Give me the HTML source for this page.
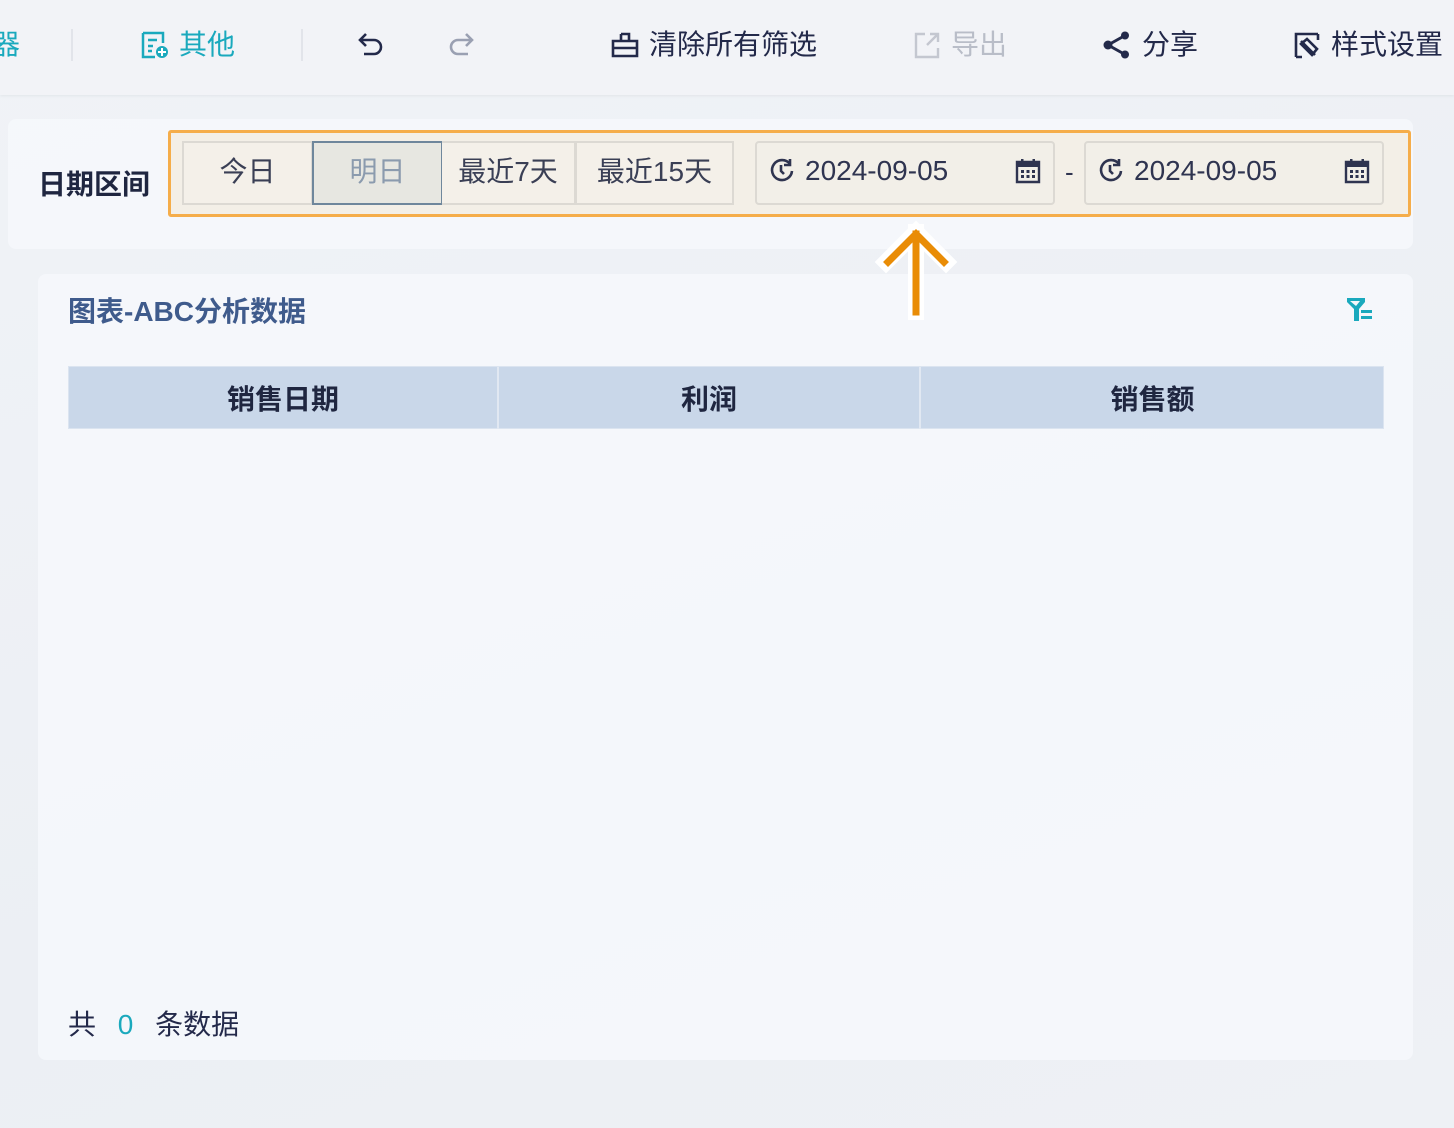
<!DOCTYPE html>
<html><head><meta charset="utf-8"><style>
*{box-sizing:border-box;margin:0;padding:0}
body{width:1454px;height:1128px;overflow:hidden;background:linear-gradient(160deg,#f0f3f7,#eceff4 60%,#eef1f5);font-family:"Liberation Sans","Noto Sans CJK SC",sans-serif;position:relative}
.abs{position:absolute}
.tb{left:0;top:0;width:1454px;height:95px;background:#f2f3f7;box-shadow:0 1px 3px rgba(0,0,0,.06)}
.ti{position:absolute;top:26px;font-size:28px;line-height:38px;color:#23294a;display:flex;align-items:center;gap:10px}
.sep{position:absolute;top:29px;width:2px;height:32px;background:#e2e4ea}
.card{background:rgba(246,248,251,.85);border-radius:8px}
.btn{position:absolute;top:8px;height:64px;border:2px solid #dcd9d3;background:#f4f0e9;font-size:28px;color:#3a3f55;display:flex;align-items:center;justify-content:center;padding-bottom:6px}
.dt{position:absolute;top:8px;height:64px;border:2px solid #dcd9d3;border-radius:4px;background:#f2efe8;font-size:28px;color:#2f3450;display:flex;align-items:center;padding-left:12px;gap:10px;padding-bottom:4px}
.th{position:absolute;top:0;height:62px;display:flex;align-items:center;justify-content:center;font-size:28px;font-weight:bold;color:#1f2640}
</style></head><body>
<div class="abs tb">
 <div class="ti" style="left:-8px;color:#1aa9bd">器</div>
 <div class="sep" style="left:71px"></div>
 <div class="ti" style="left:141px;color:#1aa9bd"><svg width="28" height="28" viewBox="0 0 28 28" fill="none" stroke="#1aa9bd" stroke-width="2.5"><path d="M2 2h20v10M2 2v24h12M7 9h9M7 15h5M7 20h4"/><circle cx="21" cy="21" r="6" fill="#1aa9bd" stroke="none"/><path d="M21 17v8M17 21h8" stroke="#fff" stroke-width="2"/></svg>其他</div>
 <div class="sep" style="left:301px"></div>
 <svg class="abs" style="left:358px;top:31px" width="28" height="28" viewBox="0 0 28 28" fill="none" stroke="#23294a" stroke-width="2.6"><path d="M8 3L2 9l6 6M2 9h14a7 7 0 010 14H6"/></svg>
 <svg class="abs" style="left:446px;top:31px" width="28" height="28" viewBox="0 0 28 28" fill="none" stroke="#9aa0b2" stroke-width="2.6"><path d="M20 3l6 6-6 6M26 9H12a7 7 0 000 14h10"/></svg>
 <div class="ti" style="left:611px"><svg width="28" height="28" viewBox="0 0 28 28" fill="none" stroke="#23294a" stroke-width="2.6"><path d="M10 3h8v7M2 10h24v15H2zM2 17h24M10 3v7"/></svg>清除所有筛选</div>
 <div class="ti" style="left:913px;color:#b9bdc8"><svg width="28" height="28" viewBox="0 0 28 28" fill="none" stroke="#c4c7d0" stroke-width="2.4"><path d="M12 3H3v23h22v-9M17 3h8v8M25 3L14 14"/></svg>导出</div>
 <div class="ti" style="left:1102px"><svg width="30" height="28" viewBox="0 0 30 28" fill="#23294a"><circle cx="6" cy="14" r="4.5"/><circle cx="23" cy="4.5" r="4"/><circle cx="23" cy="23.5" r="4"/><path d="M6 14L23 4.5M6 14l17 9.5" stroke="#23294a" stroke-width="3"/></svg>分享</div>
 <div class="ti" style="left:1293px"><svg width="28" height="28" viewBox="0 0 28 28" fill="none" stroke="#23294a" stroke-width="2.6"><path d="M3 26V3h22M3 26h6M25 3v6M8 10l14 14M14 8l10 10-5 6-11-11z"/></svg>样式设置</div>
</div>
<div class="abs card" style="left:8px;top:119px;width:1405px;height:130px"></div>
<div class="abs" style="left:38px;top:163px;font-size:28px;font-weight:bold;color:#1f2640">日期区间</div>
<div class="abs" style="left:168px;top:130px;width:1243px;height:87px;border:3px solid #f5ad4a;border-radius:3px;background:#f3efe7">
 <div class="btn" style="left:11px;width:131px">今日</div>
 <div class="btn" style="left:141px;width:131px;border-color:#6f879c;background:#e7e7e1;color:#8b9bae">明日</div>
 <div class="btn" style="left:271px;width:134px;border-left:none">最近7天</div>
 <div class="btn" style="left:404px;width:159px">最近15天</div>
 <div class="dt" style="left:584px;width:300px"><svg width="26" height="26" viewBox="0 0 26 26" fill="none" stroke="#2f3450" stroke-width="2.6"><path d="M21 6A10 10 0 1 0 23 13M21 1v6h-6M12 7v6l3 3"/></svg>2024-09-05<svg style="margin-left:auto;margin-right:12px" width="26" height="26" viewBox="0 0 26 26" fill="#2f3450"><path d="M2 4h22v20H2z" fill="none" stroke="#2f3450" stroke-width="2.4"/><rect x="2" y="4" width="22" height="5"/><rect x="6" y="1" width="2.5" height="5"/><rect x="17.5" y="1" width="2.5" height="5"/><rect x="6" y="12" width="3" height="3"/><rect x="11.5" y="12" width="3" height="3"/><rect x="17" y="12" width="3" height="3"/><rect x="6" y="17" width="3" height="3"/><rect x="11.5" y="17" width="3" height="3"/><rect x="17" y="17" width="3" height="3"/></svg></div>
 <div class="abs" style="left:894px;top:24px;font-size:26px;color:#2f3450">-</div>
 <div class="dt" style="left:913px;width:300px"><svg width="26" height="26" viewBox="0 0 26 26" fill="none" stroke="#2f3450" stroke-width="2.6"><path d="M21 6A10 10 0 1 0 23 13M21 1v6h-6M12 7v6l3 3"/></svg>2024-09-05<svg style="margin-left:auto;margin-right:12px" width="26" height="26" viewBox="0 0 26 26" fill="#2f3450"><path d="M2 4h22v20H2z" fill="none" stroke="#2f3450" stroke-width="2.4"/><rect x="2" y="4" width="22" height="5"/><rect x="6" y="1" width="2.5" height="5"/><rect x="17.5" y="1" width="2.5" height="5"/><rect x="6" y="12" width="3" height="3"/><rect x="11.5" y="12" width="3" height="3"/><rect x="17" y="12" width="3" height="3"/><rect x="6" y="17" width="3" height="3"/><rect x="11.5" y="17" width="3" height="3"/><rect x="17" y="17" width="3" height="3"/></svg></div>
</div>
<div class="abs card" style="left:38px;top:274px;width:1375px;height:786px"></div>
<svg class="abs" style="left:870px;top:220px" width="92" height="104" viewBox="0 0 92 104"><g fill="none" stroke-linecap="square"><path d="M46 12v80M16 42L46 12l30 30" stroke="#fff" stroke-width="16"/><path d="M46 14v78M18 42L46 14l28 28" stroke="#e98c06" stroke-width="7"/></g></svg>
<div class="abs" style="left:68px;top:290px;font-size:28px;font-weight:bold;color:#3f5b8c">图表-ABC分析数据</div>
<svg class="abs" style="left:1345px;top:297px" width="28" height="26" viewBox="0 0 28 26"><path d="M0 1h20v4l-6 7v12h-5V12L2 5V1z" fill="#1aa9bd"/><rect x="16" y="13" width="11" height="3" fill="#1aa9bd"/><rect x="16" y="19" width="11" height="3" fill="#1aa9bd"/><path d="M5 4h10l-4 5z" fill="#f5f7fa"/></svg>
<div class="abs" style="left:68px;top:366px;width:1316px;height:63px;background:#c9d7e9;border:1px solid #dbe4f0">
 <div class="th" style="left:0;width:428px">销售日期</div>
 <div class="abs" style="left:428px;top:0;width:2px;height:62px;background:#e1e8f2"></div>
 <div class="th" style="left:430px;width:420px">利润</div>
 <div class="abs" style="left:850px;top:0;width:2px;height:62px;background:#e1e8f2"></div>
 <div class="th" style="left:852px;width:463px">销售额</div>
</div>
<div class="abs" style="left:68px;top:1003px;font-size:28px;color:#23294a">共 <span style="color:#1aa9bd;margin:0 14px">0</span> 条数据</div>
</body></html>
